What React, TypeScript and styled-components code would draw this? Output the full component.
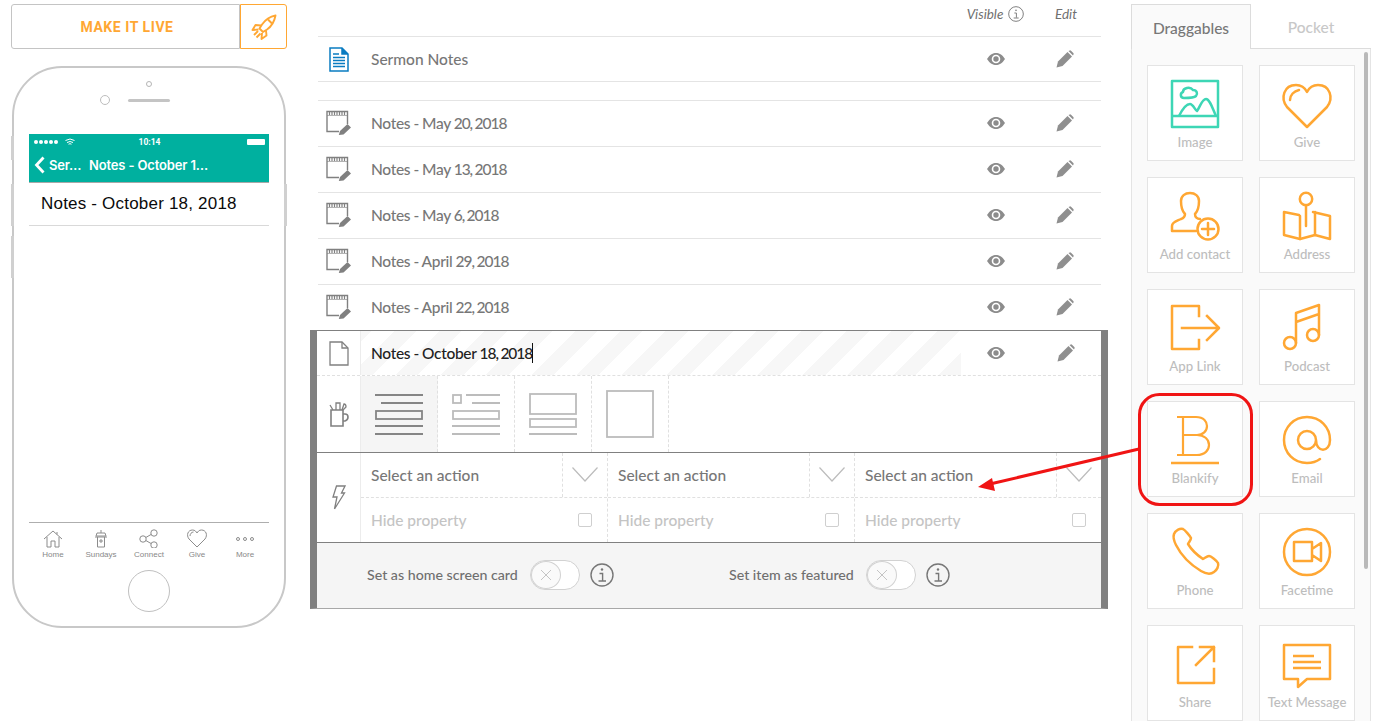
import React from "react";
import styled, { createGlobalStyle } from "styled-components";

const ORANGE = "#ffa733";
const TEAL = "#3dd6b5";
const UI_FONT = `"Lato", "Open Sans", sans-serif`;

const Global = createGlobalStyle`
  html, body { margin: 0; padding: 0; background: #fff; }
  body { font-family: ${UI_FONT}; overflow: hidden; }
  * { box-sizing: border-box; }
`;

const Page = styled.div`
  position: relative;
  display: flex;
  align-items: flex-start;
  width: 1384px;
  height: 721px;
  overflow: hidden;
`;

/* ---------- left column ---------- */
const LeftColumn = styled.div`
  width: 276px;
  margin-left: 11px;
  padding-top: 4px;
  flex: none;
`;
const LiveBar = styled.div`
  display: flex;
  height: 45px;
`;
const LiveButton = styled.div`
  width: 229px;
  display: flex;
  align-items: center;
  justify-content: center;
  padding-left: 3px;
  border: 1px solid #c4c4c4;
  border-radius: 3px 0 0 3px;
  color: ${ORANGE};
  font: 700 14px "Roboto", sans-serif;
  letter-spacing: 0.55px;
`;
const RocketButton = styled.div`
  width: 47px;
  display: flex;
  align-items: center;
  justify-content: center;
  border: 1px solid ${ORANGE};
  border-radius: 0 3px 3px 0;
`;
const Phone = styled.div`
  position: relative;
  width: 274px;
  height: 562px;
  margin: 17px 0 0 1px;
  border: 2px solid #c8c8c8;
  border-radius: 50px;
  padding: 0 15px;
  display: flex;
  flex-direction: column;
`;
const SideKey = styled.span<{ $left?: boolean; $top: number; $h: number }>`
  position: absolute;
  ${(p) => (p.$left ? "left: -3px;" : "right: -3px;")}
  top: ${(p) => p.$top}px;
  width: 3px;
  height: ${(p) => p.$h}px;
  background: #d0d0d0;
`;
const Sensor = styled.div`
  width: 6px;
  height: 6px;
  margin: 13px auto 0;
  border: 1px solid #b5b5b5;
  border-radius: 50%;
  flex: none;
`;
const EarRow = styled.div`
  display: grid;
  grid-template-columns: 1fr 42px 1fr;
  align-items: center;
  height: 10px;
  margin-top: 8px;
  flex: none;
`;
const Camera = styled.span`
  justify-self: end;
  width: 10px;
  height: 10px;
  margin-right: 18px;
  border: 1.5px solid #bdbdbd;
  border-radius: 50%;
`;
const Speaker = styled.span`
  height: 3px;
  border-radius: 2px;
  background: #c4c4c4;
`;
const Screen = styled.div`
  margin-top: 29px;
  height: 436px;
  display: flex;
  flex-direction: column;
  flex: none;
`;
const AppHeader = styled.div`
  height: 49px;
  background: #00b09f;
  border-bottom: 1px solid #a8a8a8;
  color: #fff;
  flex: none;
`;
const StatusRow = styled.div`
  display: grid;
  grid-template-columns: 1fr auto 1fr;
  align-items: center;
  height: 16px;
  padding: 0 4px 0 5px;
  font: 700 8.5px "Roboto", sans-serif;
`;
const Signal = styled.div`
  display: flex;
  align-items: center;
  gap: 1px;
`;
const SignalDot = styled.span`
  width: 4px;
  height: 4px;
  border-radius: 50%;
  background: #fff;
`;
const Battery = styled.span`
  justify-self: end;
  width: 18px;
  height: 6px;
  border-radius: 1px;
  background: #fff;
`;
const NavRow = styled.div`
  display: flex;
  align-items: center;
  height: 31px;
  padding: 0 0 2px 5px;
  font: 600 13px "Inter", sans-serif;
  letter-spacing: -0.15px;
`;
const BackLabel = styled.span`
  margin-left: 4px;
  width: 40px;
`;
const NoteRow = styled.div`
  height: 43px;
  padding: 0 12px 1px;
  display: flex;
  align-items: center;
  border-bottom: 1px solid #d9d9d9;
  color: #0a0a0a;
  font: 400 17px "Liberation Sans", sans-serif;
  letter-spacing: 0.2px;
  flex: none;
`;
const TabBar = styled.div`
  margin-top: auto;
  height: 48px;
  display: grid;
  grid-template-columns: repeat(5, 48px);
  border-top: 1px solid #aeaeae;
  flex: none;
`;
const TabItem = styled.div`
  display: flex;
  flex-direction: column;
  align-items: center;
  padding-top: 6px;
  color: #888;
  font: 400 8px "Liberation Sans", sans-serif;
`;
const TabLabel = styled.span`
  margin-top: 2px;
`;
const HomeKey = styled.div`
  width: 42px;
  height: 42px;
  margin: 0 auto;
  border: 1.5px solid #c0c0c0;
  border-radius: 50%;
  flex: none;
`;

/* ---------- middle column ---------- */
const MiddleColumn = styled.div`
  width: 798px;
  margin-left: 23px;
  flex: none;
`;
const ListWrap = styled.div`
  margin: 0 7px 0 8px;
`;
const ColumnHead = styled.div`
  display: grid;
  grid-template-columns: 1fr 66px 72px;
  align-items: center;
  height: 37px;
  padding-bottom: 9px;
  border-bottom: 1px solid #e4e4e4;
  color: #707070;
  font: italic 400 13.5px ${UI_FONT};
  text-align: center;
`;
const VisibleHead = styled.span`
  display: flex;
  align-items: center;
  justify-content: center;
  gap: 5px;
  margin-right: 1px;
`;
const EditHead = styled.span`
  padding-left: 2px;
`;
const Row = styled.div<{ $top?: boolean }>`
  display: grid;
  grid-template-columns: 53px 1fr 66px 72px;
  align-items: center;
  height: ${(p) => (p.$top ? 45 : 46)}px;
  padding-bottom: ${(p) => (p.$top ? 0 : 2)}px;
  border-bottom: 1px solid #e4e4e4;
  color: #777;
  font: 500 15.5px ${UI_FONT};
`;
const DateText = styled.span`
  letter-spacing: -0.3px;
  word-spacing: -0.5px;
  white-space: pre;
`;
const DateNumber = styled.span`
  letter-spacing: -1px;
`;
const Spacer = styled.div`
  height: 19px;
  border-bottom: 1px solid #e4e4e4;
`;
const IconCell = styled.span`
  display: flex;
  align-items: center;
  justify-content: center;
  padding-right: 12px;
`;
const ActionCell = styled.span`
  display: flex;
  align-items: center;
  justify-content: center;
`;

const Editor = styled.div`
  margin-top: -1px;
  border-left: 7px solid #808080;
  border-right: 7px solid #808080;
  border-top: 1px solid #808080;
  border-bottom: 1px solid #a8a8a8;
  display: flex;
  flex-direction: column;
`;
const TitleRow = styled.div`
  display: grid;
  grid-template-columns: 44px 1fr 70px 70px;
  height: 45px;
  border-bottom: 1px dashed #e0e0e0;
  align-items: stretch;
`;
const SideCell = styled.div`
  display: flex;
  align-items: center;
  justify-content: center;
  border-right: 1px solid #ececec;
`;
const TitleInput = styled.div`
  display: flex;
  align-items: center;
  padding-left: 10px;
  color: #222;
  font: 500 15.5px ${UI_FONT};
  background: repeating-linear-gradient(-45deg, #f7f7f7 0 16px, #fff 16px 32px);
`;
const Caret = styled.span`
  display: inline-block;
  width: 1px;
  height: 20px;
  background: #111;
`;
const LayoutRow = styled.div`
  display: grid;
  grid-template-columns: 44px repeat(4, 77px);
  height: 77px;
  border-bottom: 1px solid #808080;
`;
const LayoutTile = styled.div<{ $active?: boolean }>`
  display: flex;
  align-items: center;
  justify-content: center;
  padding-bottom: 1px;
  background: ${(p) => (p.$active ? "#f5f5f5" : "#fff")};
  border-right: 1px dashed #e0e0e0;
`;
const ActionRow = styled.div`
  display: grid;
  grid-template-columns: 44px 247px 247px 246px;
  height: 90px;
  border-bottom: 1px solid #808080;
`;
const ActionColumn = styled.div`
  display: flex;
  flex-direction: column;
  border-right: 1px dashed #e0e0e0;
  &:last-child { border-right: 0; }
`;
const SelectLine = styled.div`
  display: flex;
  height: 45px;
  border-bottom: 1px dashed #e0e0e0;
`;
const SelectLabel = styled.div`
  flex: 1;
  display: flex;
  align-items: center;
  padding: 0 0 1px 10px;
  color: #777;
  font: 500 15.5px ${UI_FONT};
`;
const SelectArrow = styled.div`
  width: 45px;
  display: flex;
  align-items: center;
  justify-content: center;
  padding-bottom: 2px;
  border-left: 1px dashed #e0e0e0;
`;
const HideLine = styled.div`
  flex: 1;
  display: flex;
  align-items: center;
  justify-content: space-between;
  padding: 0 15px 0 10px;
  color: #c4c4c4;
  font: 500 15.5px ${UI_FONT};
`;
const Check = styled.span`
  width: 14px;
  height: 14px;
  border: 1px solid #cfcfcf;
  border-radius: 2px;
`;
const EditorFooter = styled.div`
  height: 65px;
  background: #f5f5f5;
  display: flex;
  align-items: center;
  padding: 0 0 1px 50px;
  color: #6f6f6f;
  font: 500 14.2px ${UI_FONT};
`;
const FooterGroup = styled.div<{ $w: number }>`
  display: flex;
  align-items: center;
  width: ${(p) => p.$w}px;
`;
const FooterLabel = styled.span`
  padding-bottom: 2px;
`;
const Toggle = styled.span`
  display: inline-flex;
  width: 50px;
  height: 30px;
  margin: 0 10px 0 12px;
  border: 1px solid #d2d2d2;
  border-radius: 15px;
  background: #fff;
`;
const Knob = styled.span`
  width: 30px;
  height: 28px;
  display: flex;
  align-items: center;
  justify-content: center;
  border: 1px solid #d2d2d2;
  border-radius: 50%;
  background: #fafafa;
`;

/* ---------- right column ---------- */
const RightColumn = styled.div`
  position: relative;
  width: 240px;
  margin-left: 23px;
  padding-top: 4px;
  flex: none;
`;
const TabsHead = styled.div`
  display: grid;
  grid-template-columns: 120px 120px;
  height: 45px;
`;
const PanelTab = styled.div<{ $active?: boolean }>`
  display: flex;
  align-items: center;
  justify-content: center;
  padding-top: 2px;
  font: 500 15.5px ${UI_FONT};
  color: ${(p) => (p.$active ? "#777" : "#c8c8c8")};
  background: ${(p) => (p.$active ? "#fafafa" : "#fff")};
  border: ${(p) => (p.$active ? "1px solid #dcdcdc" : "0")};
  border-bottom: ${(p) => (p.$active ? "0" : "1px solid #dcdcdc")};
`;
const Panel = styled.div`
  height: 680px;
  padding: 16px 15px 0;
  background: #fafafa;
  border-left: 1px solid #e4e4e4;
  border-right: 1px solid #e4e4e4;
  display: grid;
  grid-template-columns: 96px 96px;
  grid-auto-rows: 96px;
  gap: 16px;
`;
const Tile = styled.div`
  display: flex;
  flex-direction: column;
  align-items: center;
  padding-top: 14px;
  background: #fff;
  border: 1px solid #e4e4e4;
  color: #bdbdbd;
  font: 500 13.2px ${UI_FONT};
`;
const TileIcon = styled.svg`
  overflow: visible;
  flex: none;
`;
const TileLabel = styled.span`
  margin-top: 6px;
  white-space: nowrap;
`;
const ScrollThumb = styled.div`
  position: absolute;
  left: 233px;
  top: 52px;
  width: 4px;
  height: 517px;
  border-radius: 2px;
  background: #b9b9b9;
`;
const Annotation = styled.svg`
  position: absolute;
  left: 0;
  top: 0;
  pointer-events: none;
`;
const WifiIcon = styled.svg`
  margin-left: 6px;
`;

/* ---------- icons ---------- */
const Info = ({ size, color = "#777" }: { size: number; color?: string }) => (
  <svg width={size} height={size} viewBox="0 0 24 24" fill="none" stroke={color} strokeWidth="1.4">
    <circle cx="12" cy="12" r="11" />
    <circle cx="12" cy="6.5" r="1.2" fill={color} stroke="none" />
    <path d="M9.5 10.5H12.6V17.5M8.5 18H16" />
  </svg>
);
const Eye = () => (
  <svg width="18" height="12" viewBox="0 0 18 12">
    <path
      fill="#8c8c8c"
      fillRule="evenodd"
      d="M0 6C3 1.4 6 0 9 0s6 1.4 9 6c-3 4.6-6 6-9 6S3 10.6 0 6zm9-4.3a4.3 4.3 0 1 0 0 8.6 4.3 4.3 0 0 0 0-8.6z"
    />
    <circle cx="9" cy="6" r="2.7" fill="#8c8c8c" />
  </svg>
);
const Pencil = () => (
  <svg width="18" height="18" viewBox="0 0 18 18" fill="#8f8f8f">
    <path d="M0.5 17.5L2 11.5L11.5 2L16 6.5L6.5 16Z" />
    <path d="M12.5 1L13.8 0.4Q14.5 0.2 15 0.7L17.3 3Q17.8 3.5 17.6 4.2L17 5.5Z" />
  </svg>
);
const NoteIcon = () => (
  <svg width="26" height="26" viewBox="0 0 26 26" fill="none" stroke="#808080" strokeWidth="1.4">
    <path d="M13 21.5H1V1.5H21.5V14" />
    <path d="M3.5 2V5M6 2V5M8.5 2V5M11 2V5M13.5 2V5M16 2V5M18.5 2V5" strokeWidth="1.2" />
    <path d="M1 5.5H21.5" strokeWidth="0.6" />
    <path d="M12.8 25L14 21L21.5 14L25 17.5L17.5 24.4Z" fill="#808080" stroke="none" />
  </svg>
);
const DocBlue = () => (
  <svg width="20" height="25" viewBox="0 0 20 25" fill="none" stroke="#0a7cc1" strokeWidth="1.5">
    <path d="M1 1H13L19 7V24H1Z" />
    <path d="M13 1V7H19" fill="#0a7cc1" />
    <path d="M4 7H10M4 10.5H16M4 13.5H16M4 16.5H16M4 19.5H16" strokeWidth="1.4" />
  </svg>
);
const DocGrey = () => (
  <svg width="20" height="25" viewBox="0 0 20 25" fill="none" stroke="#808080" strokeWidth="1.3">
    <path d="M1 1H13L19 7V24H1Z" />
    <path d="M13 1V7H19" />
  </svg>
);
const Mug = () => (
  <svg width="20" height="26" viewBox="0 0 20 26" fill="none" stroke="#808080" strokeWidth="1.6">
    <path d="M2 9H14V25H2Z" />
    <path d="M14 13H16Q19 13 19 16T16 20H14" />
    <path d="M4 9L1 4M7 9V2H11V9M13 9L15 3Q17 3 17 6L14 9" strokeWidth="1.3" />
  </svg>
);
const Bolt = () => (
  <svg width="14" height="25" viewBox="0 0 14 25" fill="none" stroke="#808080" strokeWidth="1.3">
    <path d="M4.5 1H13L9.5 8H12.5L2.5 24L5 12H1Z" />
  </svg>
);
const Chevron = () => (
  <svg width="26" height="15" viewBox="0 0 26 15" fill="none" stroke="#bcbcbc" strokeWidth="1.2">
    <path d="M0.5 0.5L13 14L25.5 0.5" />
  </svg>
);
const Cross = () => (
  <svg width="12" height="12" viewBox="0 0 12 12" fill="none" stroke="#c4c4c4" strokeWidth="1">
    <path d="M1 1L11 11M11 1L1 11" />
  </svg>
);
const Rocket = () => (
  <svg width="26" height="26" viewBox="0 0 26 26" fill="none" stroke={ORANGE} strokeWidth="1.9" strokeLinejoin="round">
    <path d="M24.5 1.5C19 2.5 14.5 5.5 11 10.5L8.5 14.5L12 18L16 15.5C21 12 23.5 7 24.5 1.5Z" />
    <path d="M10 11.5L4.5 11L1.5 16L7.5 15.5" />
    <path d="M15 16.5L15.5 21.5L10.5 25L11 19" />
    <path d="M17 5.5L21 9.5" />
    <path d="M7 17L3 21M9.5 19.5L5.5 23.5" />
  </svg>
);

const LayoutIcon = ({ kind, color }: { kind: number; color: string }) => (
  <svg width="48" height="48" viewBox="0 0 48 48" fill="none" stroke={color} strokeWidth="1.8">
    {kind === 0 && (
      <>
        <path d="M0 5H48M6 13H48M0 36H48M0 44H48" />
        <rect x="1" y="21" width="46" height="8" />
      </>
    )}
    {kind === 1 && (
      <>
        <rect x="1" y="5" width="8" height="8" />
        <path d="M14 5H48M20 13H48M0 36H48M0 44H48" />
        <rect x="1" y="21" width="46" height="8" />
      </>
    )}
    {kind === 2 && (
      <>
        <rect x="1" y="4" width="46" height="20" />
        <rect x="1" y="29" width="46" height="8" />
        <path d="M0 44H48" />
      </>
    )}
    {kind === 3 && <rect x="1" y="1" width="46" height="46" />}
  </svg>
);

const stroke = { fill: "none", stroke: ORANGE, strokeWidth: 2.5, strokeLinecap: "round", strokeLinejoin: "round" } as const;

const tileArt: Record<string, React.ReactNode> = {
  Image: (
    <g fill="none" stroke={TEAL} strokeWidth="2.5" strokeLinejoin="round">
      <rect x="1" y="1" width="46" height="46" />
      <path d="M1 36H47" />
      <path d="M8 36C11 30 15 24 19 24C22 24 24 30 26 31C29 27 31 19 35 19C39 19 42 30 45 36" />
      <path d="M13 18C9 18 9 13 12 12C12 8 19 6 22 10C26 10 27 14 25 16C23 18 18 18 13 18Z" />
    </g>
  ),
  Give: (
    <g {...stroke}>
      <path d="M24 47L4 27C-3 18 1 5 13 5C18 5 22 8 24 12C26 8 30 5 35 5C47 5 51 18 44 27Z" />
      <path d="M7 20C7 15 11 11 16 10" />
    </g>
  ),
  "Add contact": (
    <g {...stroke}>
      <path d="M25 39H1V34C1 30 6 29 10 27C13 26 14 24 14 22C11 19 10 15 10 9C10 4 14 1 19 1C24 1 28 4 28 9C28 15 27 19 24 22C24 25 26 27 29 27" />
      <circle cx="37" cy="37" r="10.5" />
      <path d="M37 31V43M31 37H43" />
    </g>
  ),
  Address: (
    <g {...stroke}>
      <circle cx="23" cy="7" r="6.2" />
      <path d="M23 13V34" />
      <path d="M16 23L1 20V43L17 47L32 43L47 47V24L30 20" />
      <path d="M17 24V47M32 20V43" />
    </g>
  ),
  "App Link": (
    <g {...stroke} strokeLinecap="square">
      <path d="M28 12V2H1V45H28V36" />
      <path d="M11 24H47M36 12L48 24L36 36" />
    </g>
  ),
  Podcast: (
    <g {...stroke}>
      <circle cx="7" cy="39" r="6" />
      <circle cx="30" cy="31" r="6" />
      <path d="M13 39V9L36 1V31M13 18L36 10" />
    </g>
  ),
  Blankify: (
    <g {...stroke} strokeWidth="2.2" strokeLinecap="butt">
      <path d="M6 1H25C33 1 36 6 36 10C36 15 32 19 26 19H12M12 1V39M6 39H26C34 39 38 34 38 29C38 23 33 19 26 19" />
      <path d="M0 47H48" strokeWidth="2.4" />
    </g>
  ),
  Email: (
    <g {...stroke}>
      <path d="M33 24a9 9 0 1 1-18 0a9 9 0 1 1 18 0c0 13 14 13 14 0C47 11 37 1 24 1S1 11 1 24s10 23 23 23c5 0 9-1 13-4" />
    </g>
  ),
  Phone: (
    <g {...stroke}>
      <path d="M3 6C5 2 9 0 12 1C14 2 19 8 20 10C20 12 18 14 17 16C20 21 26 27 32 31C34 30 36 28 38 28C40 28 46 33 47 35C48 38 46 42 43 44C39 47 35 46 30 43C20 37 10 27 5 17C3 13 2 9 3 6Z" />
    </g>
  ),
  Facetime: (
    <g {...stroke}>
      <circle cx="24" cy="24" r="23" />
      <path d="M11 14H29V33H11ZM29 21L38 15V33L29 27" />
    </g>
  ),
  Share: (
    <g {...stroke} strokeLinecap="square">
      <path d="M21 7H7V43H43V29" />
      <path d="M25 25L43 7M29 7H43V21" />
    </g>
  ),
  "Text Message": (
    <g {...stroke} strokeLinecap="butt">
      <path d="M1 5H47V39H24L15 47V39H1Z" />
      <path d="M10 16H31M10 22H38M10 28H38" />
    </g>
  ),
};

const tabArt: Record<string, React.ReactNode> = {
  Home: (
    <g>
      <path d="M1 10L10 2L19 10M4 8V18H8V12H12V18H16V8" />
      <path d="M14 3V5.5" />
    </g>
  ),
  Sundays: (
    <g>
      <path d="M10 1V4M6 4H14L15 7H5ZM4 8H16M6.5 8V18H13.5V8M9 11H11V13H9Z" />
    </g>
  ),
  Connect: (
    <g>
      <circle cx="4" cy="10" r="3.2" />
      <circle cx="15" cy="4" r="3.2" />
      <circle cx="15" cy="16" r="3.2" />
      <path d="M7 8.4L12.2 5.4M7 11.6L12.2 14.6" />
    </g>
  ),
  Give: (
    <g>
      <path d="M10 18L2 10C-1 6 1 1 5.5 1C8 1 9 2.5 10 4C11 2.5 12 1 14.5 1C19 1 21 6 18 10Z" />
      <path d="M3 7C3 5 4.5 3 6.5 3" />
    </g>
  ),
  More: (
    <g>
      <circle cx="3" cy="10" r="1.5" />
      <circle cx="10" cy="10" r="1.5" />
      <circle cx="17" cy="10" r="1.5" />
    </g>
  ),
};

const rows: [string, string][] = [
  ["Notes - May ", "20, 2018"],
  ["Notes - May ", "13, 2018"],
  ["Notes - May ", "6, 2018"],
  ["Notes - April ", "29, 2018"],
  ["Notes - April ", "22, 2018"],
];
const tiles = Object.keys(tileArt);

export default function App() {
  return (
    <Page>
      <Global />
      <LeftColumn>
        <LiveBar>
          <LiveButton>MAKE IT LIVE</LiveButton>
          <RocketButton>
            <Rocket />
          </RocketButton>
        </LiveBar>
        <Phone>
          <SideKey $left $top={68} $h={24} />
          <SideKey $left $top={116} $h={42} />
          <SideKey $left $top={168} $h={42} />
          <SideKey $top={116} $h={42} />
          <Sensor />
          <EarRow>
            <Camera />
            <Speaker />
          </EarRow>
          <Screen>
            <AppHeader>
              <StatusRow>
                <Signal>
                  {[0, 1, 2, 3, 4].map((i) => (
                    <SignalDot key={i} />
                  ))}
                  <WifiIcon width="10" height="8" viewBox="0 0 10 8" fill="none" stroke="#fff" strokeWidth="1">
                    <path d="M0.5 2.5Q5 -0.5 9.5 2.5M2 4.5Q5 2.5 8 4.5M3.5 6.2Q5 5.2 6.5 6.2" />
                  </WifiIcon>
                </Signal>
                <span>10:14</span>
                <Battery />
              </StatusRow>
              <NavRow>
                <svg width="11" height="18" viewBox="0 0 11 18" fill="none" stroke="#fff" strokeWidth="2.8">
                  <path d="M9.5 1.5L2.5 9L9.5 16.5" />
                </svg>
                <BackLabel>Ser…</BackLabel>
                <span>Notes - October 1…</span>
              </NavRow>
            </AppHeader>
            <NoteRow>Notes - October 18, 2018</NoteRow>
            <TabBar>
              {Object.keys(tabArt).map((t) => (
                <TabItem key={t}>
                  <svg width="20" height="19" viewBox="0 0 20 19" fill="none" stroke="#8c8c8c" strokeWidth="1">
                    {tabArt[t]}
                  </svg>
                  <TabLabel>{t}</TabLabel>
                </TabItem>
              ))}
            </TabBar>
          </Screen>
          <HomeKey />
        </Phone>
      </LeftColumn>

      <MiddleColumn>
        <ListWrap>
          <ColumnHead>
            <span />
            <VisibleHead>
              Visible <Info size={16} />
            </VisibleHead>
            <EditHead>Edit</EditHead>
          </ColumnHead>
          <Row $top>
            <IconCell>
              <DocBlue />
            </IconCell>
            <span>Sermon Notes</span>
            <ActionCell>
              <Eye />
            </ActionCell>
            <ActionCell>
              <Pencil />
            </ActionCell>
          </Row>
          <Spacer />
          {rows.map(([name, date]) => (
            <Row key={date}>
              <IconCell>
                <NoteIcon />
              </IconCell>
              <DateText>
                {name}
                <DateNumber>{date}</DateNumber>
              </DateText>
              <ActionCell>
                <Eye />
              </ActionCell>
              <ActionCell>
                <Pencil />
              </ActionCell>
            </Row>
          ))}
        </ListWrap>
        <Editor>
          <TitleRow>
            <SideCell>
              <DocGrey />
            </SideCell>
            <TitleInput>
              <DateText>
                Notes - October <DateNumber>18, 2018</DateNumber>
              </DateText>
              <Caret />
            </TitleInput>
            <ActionCell>
              <Eye />
            </ActionCell>
            <ActionCell>
              <Pencil />
            </ActionCell>
          </TitleRow>
          <LayoutRow>
            <SideCell>
              <Mug />
            </SideCell>
            {[0, 1, 2, 3].map((k) => (
              <LayoutTile key={k} $active={k === 0}>
                <LayoutIcon kind={k} color={k === 0 ? "#858585" : "#bcbcbc"} />
              </LayoutTile>
            ))}
          </LayoutRow>
          <ActionRow>
            <SideCell>
              <Bolt />
            </SideCell>
            {[0, 1, 2].map((i) => (
              <ActionColumn key={i}>
                <SelectLine>
                  <SelectLabel>Select an action</SelectLabel>
                  <SelectArrow>
                    <Chevron />
                  </SelectArrow>
                </SelectLine>
                <HideLine>
                  Hide property
                  <Check />
                </HideLine>
              </ActionColumn>
            ))}
          </ActionRow>
          <EditorFooter>
            <FooterGroup $w={362}>
              <FooterLabel>Set as home screen card</FooterLabel>
              <Toggle>
                <Knob>
                  <Cross />
                </Knob>
              </Toggle>
              <Info size={24} />
            </FooterGroup>
            <FooterGroup $w={240}>
              <FooterLabel>Set item as featured</FooterLabel>
              <Toggle>
                <Knob>
                  <Cross />
                </Knob>
              </Toggle>
              <Info size={24} />
            </FooterGroup>
          </EditorFooter>
        </Editor>
      </MiddleColumn>

      <RightColumn>
        <TabsHead>
          <PanelTab $active>Draggables</PanelTab>
          <PanelTab>Pocket</PanelTab>
        </TabsHead>
        <Panel>
          {tiles.map((t) => (
            <Tile key={t}>
              <TileIcon width="48" height="48" viewBox="0 0 48 48">
                {tileArt[t]}
              </TileIcon>
              <TileLabel>{t}</TileLabel>
            </Tile>
          ))}
        </Panel>
        <ScrollThumb />
      </RightColumn>

      <Annotation width="1384" height="721" viewBox="0 0 1384 721">
        <rect x="1139.5" y="394.5" width="112" height="110" rx="20" fill="none" stroke="#f01414" strokeWidth="3" />
        <path d="M1139 449L990 484" stroke="#f01414" strokeWidth="3" fill="none" />
        <path d="M978 487L992 478L995 491Z" fill="#f01414" />
      </Annotation>
    </Page>
  );
}
